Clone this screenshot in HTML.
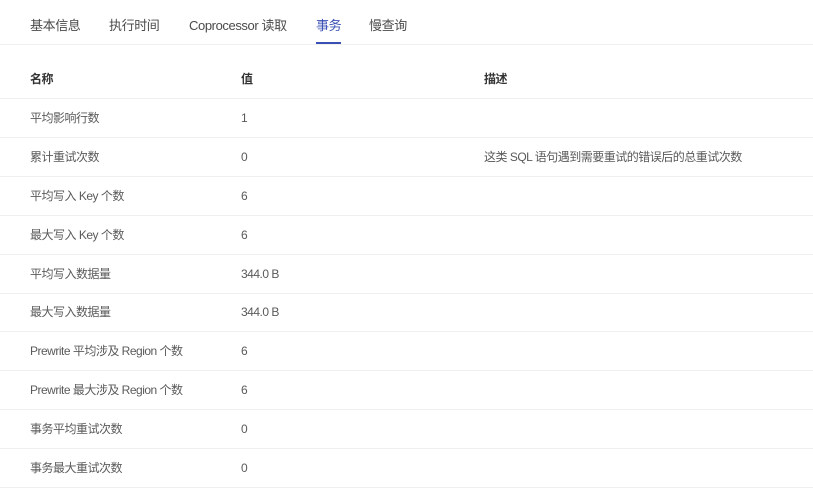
<!DOCTYPE html>
<html><head><meta charset="utf-8"><style>
*{margin:0;padding:0;box-sizing:border-box}
body{width:813px;height:488px;overflow:hidden;background:#fff;font-family:"Liberation Sans","Noto Sans CJK SC",sans-serif;color:#5a5a5a}
.tabs{position:absolute;top:0;left:0;width:813px;height:45px;border-bottom:1px solid #f0f0f0}
.tab{position:absolute;top:17px;font-size:13px;color:#4a4a4a;line-height:18px;letter-spacing:-0.4px}
.tab.on{color:#3a4fb4}
.ul{position:absolute;left:316px;top:42px;width:25px;height:2px;background:#3a4fb4}
.row{position:absolute;left:0;width:813px;height:39px;border-bottom:1px solid #efefef;font-size:12px;line-height:38px;letter-spacing:-0.5px}
.row span{position:absolute;top:0}
.hd{font-weight:bold;color:#333;font-size:12px}
</style></head><body>
<div class="tabs">
<div class="tab" style="left:30px">基本信息</div>
<div class="tab" style="left:109px">执行时间</div>
<div class="tab" style="left:189px">Coprocessor 读取</div>
<div class="tab on" style="left:316px">事务</div>
<div class="tab" style="left:369px">慢查询</div>
<div class="ul"></div>
</div>
<div class="row hd" style="top:60px"><span style="left:30px">名称</span><span style="left:241px">值</span><span style="left:484px">描述</span></div>
<div class="row" style="top:99px"><span style="left:30px">平均影响行数</span><span style="left:241px">1</span></div>
<div class="row" style="top:138px"><span style="left:30px">累计重试次数</span><span style="left:241px">0</span><span style="left:484px">这类 SQL 语句遇到需要重试的错误后的总重试次数</span></div>
<div class="row" style="top:177px"><span style="left:30px">平均写入 Key 个数</span><span style="left:241px">6</span></div>
<div class="row" style="top:216px"><span style="left:30px">最大写入 Key 个数</span><span style="left:241px">6</span></div>
<div class="row" style="top:255px"><span style="left:30px">平均写入数据量</span><span style="left:241px">344.0 B</span></div>
<div class="row" style="top:293px"><span style="left:30px">最大写入数据量</span><span style="left:241px">344.0 B</span></div>
<div class="row" style="top:332px"><span style="left:30px">Prewrite 平均涉及 Region 个数</span><span style="left:241px">6</span></div>
<div class="row" style="top:371px"><span style="left:30px">Prewrite 最大涉及 Region 个数</span><span style="left:241px">6</span></div>
<div class="row" style="top:410px"><span style="left:30px">事务平均重试次数</span><span style="left:241px">0</span></div>
<div class="row" style="top:449px"><span style="left:30px">事务最大重试次数</span><span style="left:241px">0</span></div>
</body></html>
